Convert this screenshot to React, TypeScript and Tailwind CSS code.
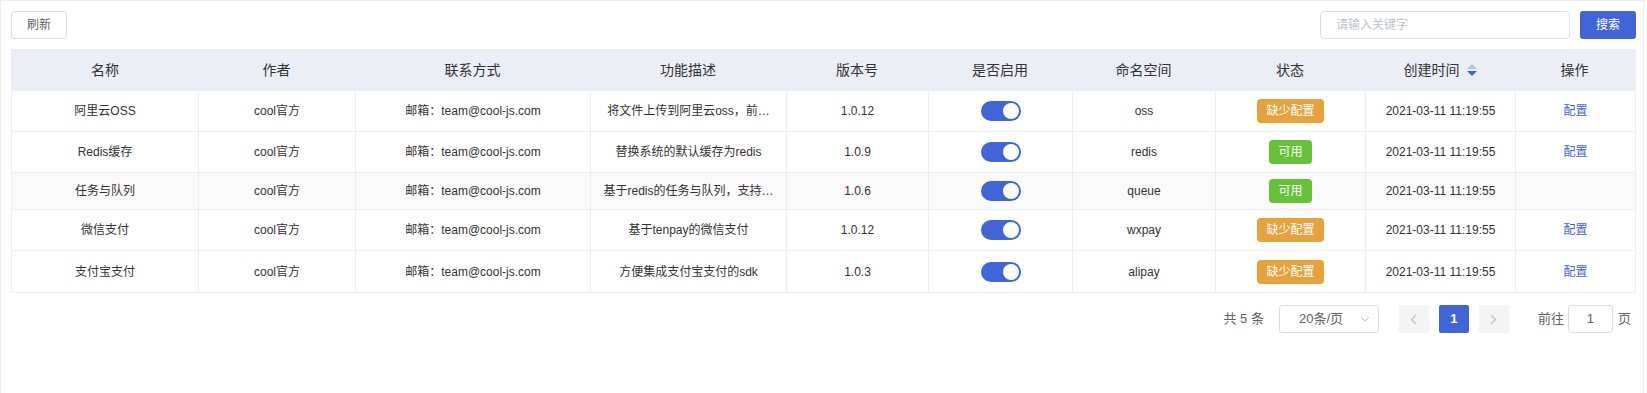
import React from "react";

const FONT = { fontFamily: '"Liberation Sans", "Noto Sans CJK SC", sans-serif' };

type Row = {
  name: string;
  desc: string;
  version: string;
  ns: string;
  ok: boolean;
  op: boolean;
  h: string;
  striped?: boolean;
};

const rows: Row[] = [
  { name: "阿里云OSS", desc: "将文件上传到阿里云oss，前…", version: "1.0.12", ns: "oss", ok: false, op: true, h: "h-[41px]" },
  { name: "Redis缓存", desc: "替换系统的默认缓存为redis", version: "1.0.9", ns: "redis", ok: true, op: true, h: "h-[41px]" },
  { name: "任务与队列", desc: "基于redis的任务与队列，支持…", version: "1.0.6", ns: "queue", ok: true, op: false, h: "h-[37px]", striped: true },
  { name: "微信支付", desc: "基于tenpay的微信支付", version: "1.0.12", ns: "wxpay", ok: false, op: true, h: "h-[41px]" },
  { name: "支付宝支付", desc: "方便集成支付宝支付的sdk", version: "1.0.3", ns: "alipay", ok: false, op: true, h: "h-[41px]" },
];

const GRID =
  "grid grid-cols-[187px_157px_235px_196px_142px_144px_143px_150px_150px_119px]";

function Cell({ children, last }: { children?: React.ReactNode; last?: boolean }) {
  return (
    <div
      className={`flex items-center justify-center whitespace-nowrap overflow-hidden ${
        last ? "" : "border-r border-[#ebeef5]"
      }`}
    >
      {children}
    </div>
  );
}

function SortCaret() {
  return (
    <svg width="10" height="12" viewBox="0 0 10 12" className="ml-[7px]">
      <path d="M0 5 L5 0 L10 5 Z" fill="#c0c4cc" />
      <path d="M0 7 L10 7 L5 12 Z" fill="#4165d7" />
    </svg>
  );
}

function Switch() {
  return (
    <div className="w-[40px] h-[20px] rounded-full bg-[#4165d7] relative">
      <div className="absolute right-[2px] top-[2px] w-[16px] h-[16px] rounded-full bg-white" />
    </div>
  );
}

export default function App() {
  const headers = ["名称", "作者", "联系方式", "功能描述", "版本号", "是否启用", "命名空间", "状态", "创建时间", "操作"];
  return (
    <div
      className="w-[1644px] h-[393px] bg-white border-l border-t border-r border-[#eeeeee] pt-[10px] pl-[10px] pr-[7px]"
      style={FONT}
    >
      {/* toolbar */}
      <div className="flex items-center h-[28px]">
        <button className="h-[28px] w-[56px] border border-[#dcdfe6] rounded-[3px] text-[12px] text-[#606266] bg-white">
          刷新
        </button>
        <div className="flex-1" />
        <div className="w-[250px] h-[28px] border border-[#dcdfe6] rounded-[4px] flex items-center pl-[15px] text-[12px] text-[#c0c4cc]">
          请输入关键字
        </div>
        <button className="ml-[10px] h-[28px] w-[56px] rounded-[3px] bg-[#4165d7] text-white text-[12px]">
          搜索
        </button>
      </div>

      {/* table */}
      <div className="mt-[10px] w-[1625px] border-x border-b border-[#ebeef5] text-[#333]">
        <div className={`${GRID} h-[42px] bg-[#ebeef5] text-[14px] -mx-px w-[1625px]`}>
          {headers.map((h, i) => (
            <div
              key={h}
              className={`flex items-center justify-center ${i === 0 ? "pl-px" : ""}`}
            >
              {h}
              {h === "创建时间" && <SortCaret />}
            </div>
          ))}
        </div>
        {rows.map((r, i) => (
          <div
            key={r.name}
            className={`${GRID} ${r.h} text-[12px] ${i < rows.length - 1 ? "border-b border-[#ebeef5]" : ""} ${
              r.striped ? "bg-[#fafafa]" : "bg-white"
            }`}
          >
            <Cell>{r.name}</Cell>
            <Cell>cool官方</Cell>
            <Cell>邮箱：team@cool-js.com</Cell>
            <Cell>{r.desc}</Cell>
            <Cell>{r.version}</Cell>
            <Cell>
              <Switch />
            </Cell>
            <Cell>{r.ns}</Cell>
            <Cell>
              {r.ok ? (
                <span className="h-[24px] px-[9px] rounded-[4px] bg-[#67c23a] text-white text-[12px] flex items-center">
                  可用
                </span>
              ) : (
                <span className="h-[24px] px-[9px] rounded-[4px] bg-[#e6a23c] text-white text-[12px] flex items-center">
                  缺少配置
                </span>
              )}
            </Cell>
            <Cell>2021-03-11 11:19:55</Cell>
            <Cell last>{r.op && <span className="text-[#4165d7]">配置</span>}</Cell>
          </div>
        ))}
      </div>

      {/* pagination */}
      <div className="mt-[12px] flex items-center justify-end h-[28px] pr-[5px] text-[13px] text-[#606266] w-[1625px]">
        <span>共 5 条</span>
        <div className="ml-[15px] w-[100px] h-[28px] border border-[#dcdfe6] rounded-[3px] flex items-center pl-[19px] pr-[8px]">
          <span className="flex-1">20条/页</span>
          <svg width="10" height="6" viewBox="0 0 10 6">
            <path d="M1 1 L5 5 L9 1" stroke="#c0c4cc" strokeWidth="1" fill="none" />
          </svg>
        </div>
        <div className="ml-[20px] w-[30px] h-[28px] rounded-[2px] bg-[#f4f4f5] flex items-center justify-center">
          <svg width="7" height="11" viewBox="0 0 7 11">
            <path d="M6 1 L1.5 5.5 L6 10" stroke="#c0c4cc" strokeWidth="1.4" fill="none" />
          </svg>
        </div>
        <div className="ml-[10px] w-[30px] h-[28px] rounded-[2px] bg-[#4165d7] text-white font-bold flex items-center justify-center">
          1
        </div>
        <div className="ml-[10px] w-[30px] h-[28px] rounded-[2px] bg-[#f4f4f5] flex items-center justify-center">
          <svg width="7" height="11" viewBox="0 0 7 11">
            <path d="M1 1 L5.5 5.5 L1 10" stroke="#c0c4cc" strokeWidth="1.4" fill="none" />
          </svg>
        </div>
        <span className="ml-[29px]">前往</span>
        <div className="ml-[4px] w-[45px] h-[28px] border border-[#dcdfe6] rounded-[3px] flex items-center justify-center">
          1
        </div>
        <span className="ml-[5px]">页</span>
      </div>
    </div>
  );
}
